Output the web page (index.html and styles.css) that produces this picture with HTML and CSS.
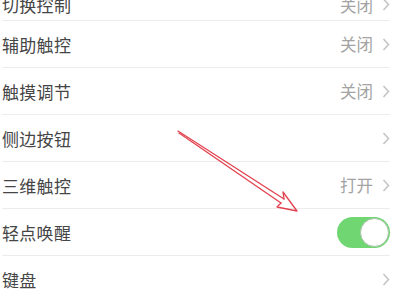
FILE: index.html
```html
<!DOCTYPE html>
<html lang="zh-CN">
<head>
<meta charset="utf-8">
<link rel="stylesheet" href="styles.css">
</head>
<body>
<div class="list">
  <div class="row first">
    <span class="label">切换控制</span>
    <span class="right"><span class="value">关闭</span><svg class="chev" viewBox="0 0 8 13"><polyline points="1.5,1 6.5,6.5 1.5,12"/></svg></span>
  </div>
  <div class="row">
    <span class="label">辅助触控</span>
    <span class="right"><span class="value">关闭</span><svg class="chev" viewBox="0 0 8 13"><polyline points="1.5,1 6.5,6.5 1.5,12"/></svg></span>
  </div>
  <div class="row">
    <span class="label">触摸调节</span>
    <span class="right"><span class="value">关闭</span><svg class="chev" viewBox="0 0 8 13"><polyline points="1.5,1 6.5,6.5 1.5,12"/></svg></span>
  </div>
  <div class="row">
    <span class="label">侧边按钮</span>
    <span class="right"><svg class="chev" viewBox="0 0 8 13"><polyline points="1.5,1 6.5,6.5 1.5,12"/></svg></span>
  </div>
  <div class="row">
    <span class="label">三维触控</span>
    <span class="right"><span class="value">打开</span><svg class="chev" viewBox="0 0 8 13"><polyline points="1.5,1 6.5,6.5 1.5,12"/></svg></span>
  </div>
  <div class="row">
    <span class="label">轻点唤醒</span>
    <span class="toggle"><span class="knob"></span></span>
  </div>
  <div class="row last">
    <span class="label">键盘</span>
    <span class="right"><svg class="chev" viewBox="0 0 8 13"><polyline points="1.5,1 6.5,6.5 1.5,12"/></svg></span>
  </div>
</div>
<svg class="arrow" width="400" height="300" viewBox="0 0 400 300">
  <g fill="none" stroke="#e2424f" stroke-width="1.3" stroke-linejoin="round" stroke-linecap="round">
    <path d="M178,131 L284,199"/>
    <path d="M179,133 L281,203"/>
    <path d="M283,192 L297,211 L277,207 L281,203 M284,199 L283,192"/>
  </g>
</svg>
</body>
</html>
```
FILE: styles.css
```css
html, body {
  margin: 0;
  padding: 0;
  background: #ffffff;
  width: 400px;
  height: 300px;
  overflow: hidden;
}
body {
  position: relative;
  font-family: "Noto Sans CJK SC", "Noto Sans", sans-serif;
}
.list {
  margin-top: -19px;
  padding-left: 2px;
  width: 388px;
}
.row {
  display: flex;
  align-items: center;
  justify-content: space-between;
  height: 46px;
  border-bottom: 1px solid #ececec;
}
.row.first {
  height: 31px;
  padding-top: 8px;
}
.row.last {
  border-bottom: none;
}
.label {
  font-size: 17px;
  color: #454545;
  letter-spacing: 0.3px;
}
.right {
  display: flex;
  align-items: center;
  gap: 9px;
}
.value {
  font-size: 16.5px;
  color: #a3a3a3;
}
.chev {
  width: 8px;
  height: 13px;
  fill: none;
  stroke: #c5c5c8;
  stroke-width: 1.6;
}
.toggle {
  position: relative;
  display: block;
  width: 53px;
  height: 31px;
  border-radius: 16px;
  background: #6fd672;
}
.knob {
  position: absolute;
  right: 1px;
  top: 1px;
  width: 27px;
  height: 27px;
  border-radius: 50%;
  background: #ffffff;
  border: 1px solid #a9bfa9;
}
.arrow {
  position: absolute;
  left: 0;
  top: 0;
  pointer-events: none;
}
```
